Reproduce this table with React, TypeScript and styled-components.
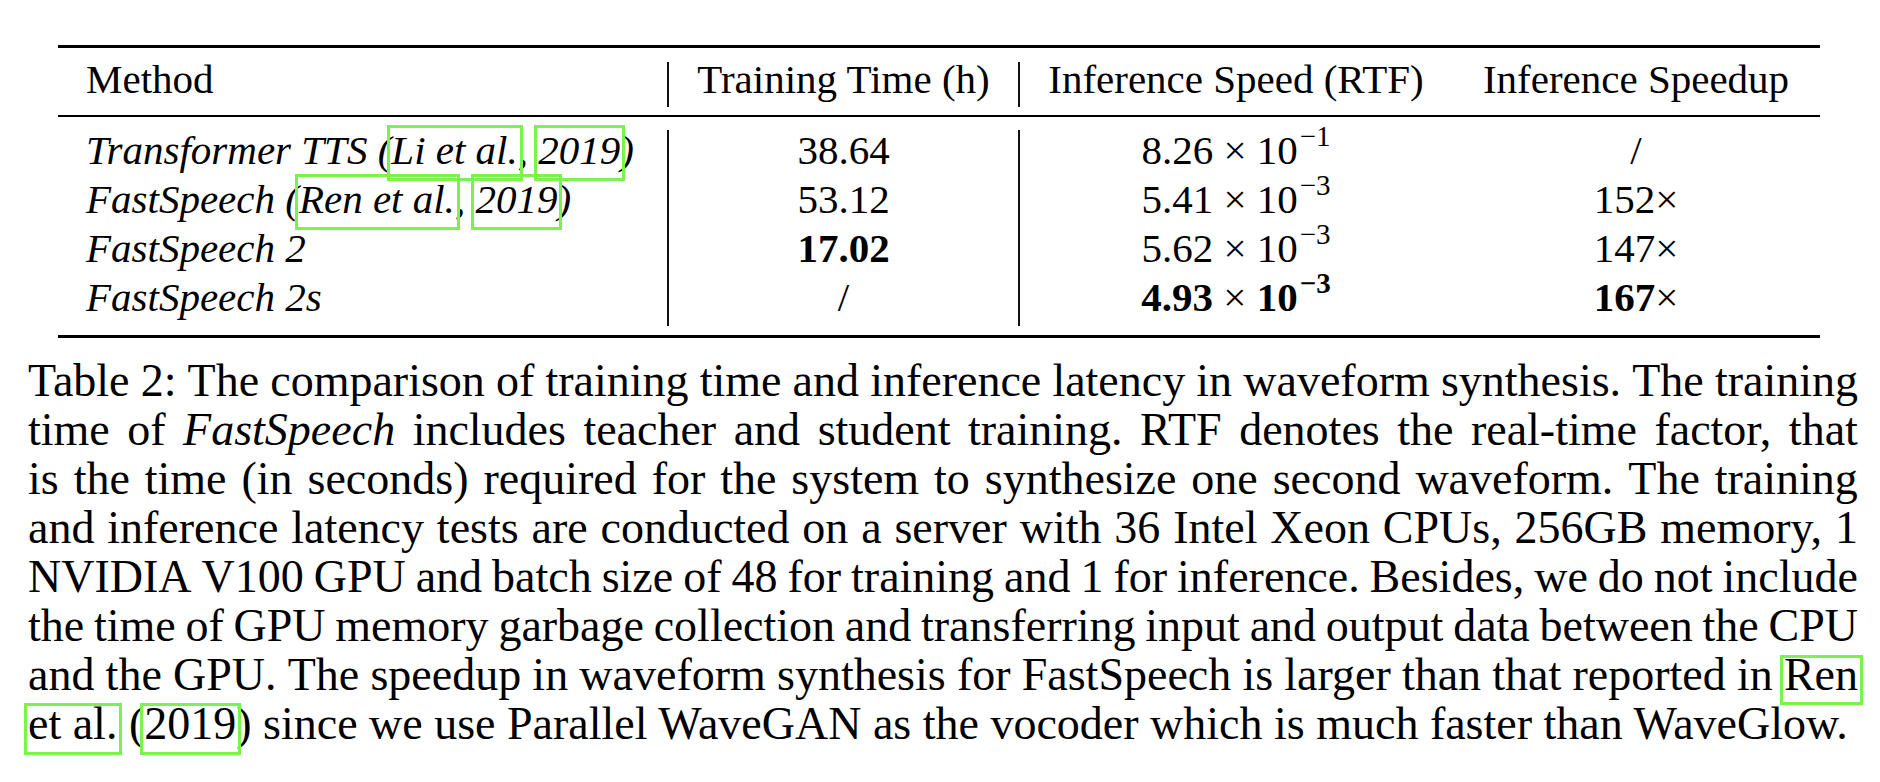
import styled, { createGlobalStyle } from 'styled-components';

const GlobalStyle = createGlobalStyle`
  html, body {
    margin: 0;
    padding: 0;
    background: #fff;
  }
  body {
    font-family: "Liberation Serif", "Times New Roman", serif;
    color: #000;
  }
`;

const COLS = '609px 351px 434px 368px';
const LINK = '#7cf24e';

const Page = styled.div`
  width: 1880px;
  height: 782px;
  box-sizing: border-box;
  padding: 45px 0 0 28px;
  overflow: hidden;
`;

const Table = styled.div`
  width: 1762px;
  margin-left: 30px;
  border-top: 3px solid #000;
  border-bottom: 3px solid #000;
  font-size: 41px;
`;

const Head = styled.div`
  display: grid;
  grid-template-columns: ${COLS};
  padding: 14px 0 8px;
  border-bottom: 2px solid #000;
`;

const Body = styled.div`
  display: grid;
  grid-template-columns: ${COLS};
  padding: 13px 0 9px;
`;

const Cell = styled.div<{ $left?: boolean; $bar?: boolean; $head?: boolean }>`
  line-height: ${(p) => (p.$head ? '35px' : '41px')};
  padding-bottom: ${(p) => (p.$head ? '10px' : '8px')};
  padding-left: ${(p) => (p.$left ? '28px' : '0')};
  text-align: ${(p) => (p.$left ? 'left' : 'center')};
  border-left: ${(p) => (p.$bar ? '2px solid #111' : 'none')};
  font-style: ${(p) => (p.$left && !p.$head ? 'italic' : 'normal')};
  white-space: nowrap;
`;

// link rectangle drawn over the citation, like the pdf viewer does
const Cite = styled.span<{ $top: number; $bottom: number }>`
  position: relative;
  &::after {
    content: '';
    position: absolute;
    top: ${(p) => p.$top}px;
    bottom: ${(p) => p.$bottom}px;
    left: -4px;
    right: -5px;
    border: 3px solid ${LINK};
  }
`;

const Sup = styled.sup`
  font-size: 29px;
  line-height: 0;
  vertical-align: 18px;
  margin-left: 2px;
`;

const Bold = styled.b`
  font-weight: 700;
`;

const Caption = styled.div`
  width: 1830px;
  margin-top: 18px;
  font-size: 46px;
  line-height: 49px;
`;

const Line = styled.div`
  display: flex;
  justify-content: space-between;
  white-space: nowrap;
`;

const LastLine = styled.div`
  white-space: nowrap;
`;

const Word = styled.span<{ $italic?: boolean }>`
  font-style: ${(p) => (p.$italic ? 'italic' : 'normal')};
`;

type Tok = string | { t: string; i?: boolean; c?: boolean };

const words = (s: string): Tok[] => s.split(' ');

const captionLines: Tok[][] = [
  words('Table 2: The comparison of training time and inference latency in waveform synthesis. The training'),
  [...words('time of'), { t: 'FastSpeech', i: true }, ...words('includes teacher and student training. RTF denotes the real-time factor, that')],
  words('is the time (in seconds) required for the system to synthesize one second waveform. The training'),
  words('and inference latency tests are conducted on a server with 36 Intel Xeon CPUs, 256GB memory, 1'),
  words('NVIDIA V100 GPU and batch size of 48 for training and 1 for inference. Besides, we do not include'),
  words('the time of GPU memory garbage collection and transferring input and output data between the CPU'),
  [...words('and the GPU. The speedup in waveform synthesis for FastSpeech is larger than that reported in'), { t: 'Ren', c: true }],
];

const Sci = ({ m, e }: { m: string; e: string }) => (
  <>
    {m} × 10<Sup>−{e}</Sup>
  </>
);

const TCite = ({ children }: { children: string }) => (
  <Cite $top={-2} $bottom={-8}>
    {children}
  </Cite>
);

const CCite = ({ children }: { children: string }) => (
  <Cite $top={5} $bottom={-6}>
    {children}
  </Cite>
);

function App() {
  return (
    <Page>
      <GlobalStyle />
      <Table>
        <Head>
          <Cell $head $left>Method</Cell>
          <Cell $head $bar>Training Time (h)</Cell>
          <Cell $head $bar>Inference Speed (RTF)</Cell>
          <Cell $head>Inference Speedup</Cell>
        </Head>
        <Body>
          <Cell $left>
            Transformer TTS (<TCite>Li et al.</TCite>, <TCite>2019</TCite>)
          </Cell>
          <Cell $bar>38.64</Cell>
          <Cell $bar><Sci m="8.26" e="1" /></Cell>
          <Cell>/</Cell>

          <Cell $left>
            FastSpeech (<TCite>Ren et al.</TCite>, <TCite>2019</TCite>)
          </Cell>
          <Cell $bar>53.12</Cell>
          <Cell $bar><Sci m="5.41" e="3" /></Cell>
          <Cell>152×</Cell>

          <Cell $left>FastSpeech 2</Cell>
          <Cell $bar><Bold>17.02</Bold></Cell>
          <Cell $bar><Sci m="5.62" e="3" /></Cell>
          <Cell>147×</Cell>

          <Cell $left>FastSpeech 2s</Cell>
          <Cell $bar>/</Cell>
          <Cell $bar>
            <Bold>4.93</Bold> × <Bold>10<Sup>−3</Sup></Bold>
          </Cell>
          <Cell><Bold>167</Bold>×</Cell>
        </Body>
      </Table>
      <Caption>
        {captionLines.map((line, li) => (
          <Line key={li}>
            {line.map((tok, wi) =>
              typeof tok === 'string' ? (
                <Word key={wi}>{tok}</Word>
              ) : tok.c ? (
                <CCite key={wi}>{tok.t}</CCite>
              ) : (
                <Word key={wi} $italic={tok.i}>{tok.t}</Word>
              ),
            )}
          </Line>
        ))}
        <LastLine>
          <CCite>et al.</CCite> (<CCite>2019</CCite>) since we use Parallel WaveGAN as the vocoder which is much faster than WaveGlow.
        </LastLine>
      </Caption>
    </Page>
  );
}

export default App;
